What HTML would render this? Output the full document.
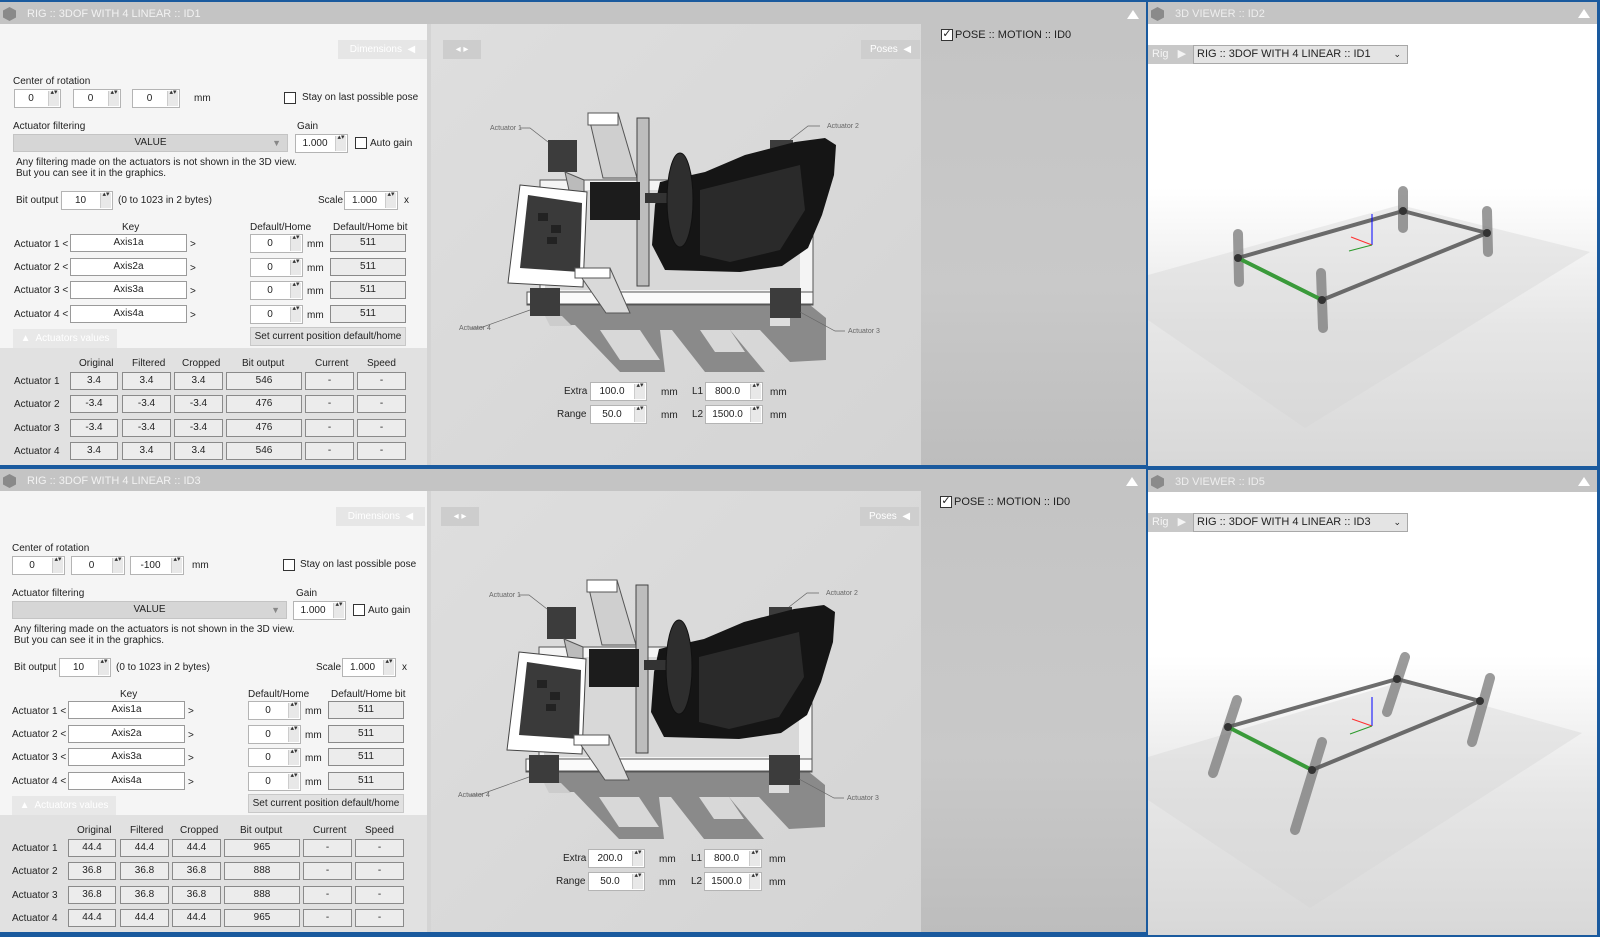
<!DOCTYPE html>
<html><head><meta charset="utf-8">
<style>
*{box-sizing:border-box;margin:0;padding:0}
body{width:1600px;height:937px;overflow:hidden;background:#1a5a9e;font-family:"Liberation Sans",Arial,sans-serif;font-size:10px;color:#222;position:relative}
.a{position:absolute}
.win{position:absolute;left:0;width:1146px;height:467px;overflow:hidden}
.tb{position:absolute;left:0;top:2px;width:1146px;height:22px;background:#c4c4c4}
.tt{position:absolute;left:27px;top:6px;color:#f2f2f2;font-size:11px}
.ico{position:absolute;left:3px;top:5px;width:13px;height:14px;background:#8a8a8a;clip-path:polygon(50% 0,100% 25%,100% 75%,50% 100%,0 75%,0 25%)}
.tri{position:absolute;width:0;height:0;border-left:6px solid transparent;border-right:6px solid transparent;border-bottom:9px solid #fff}
.form{position:absolute;left:0;top:24px;width:427px;height:324px;background:#f5f5f5}
.strip{position:absolute;left:427px;top:24px;width:4px;height:441px;background:#d4d4d4}
.vals{position:absolute;left:0;top:348px;width:427px;height:117px;background:#e1e1e1}
.img{position:absolute;left:431px;top:24px;width:490px;height:441px;background:linear-gradient(135deg,#dedede,#d4d4d4)}
.rp{position:absolute;left:921px;top:24px;width:225px;height:441px;background:linear-gradient(180deg,#c4c4c4,#c9c9c9 60%,#bdbdbd)}
.sp{position:absolute;height:19px;background:#fff;border:1px solid #b4b4b4;text-align:center;padding-right:13px;line-height:17px}
.sp:after{content:"";position:absolute;right:1px;top:1px;width:10px;height:15px;background:#e8e8e8;border-left:1px solid #ccc}
.sp:before{content:"▴▾";position:absolute;right:1px;top:-1px;width:10px;font-size:7px;line-height:8px;white-space:pre-wrap;word-break:break-all;z-index:2;color:#333}
.bx{position:absolute;height:18px;border:1px solid #8a8a8a;background:#ececec;text-align:center;line-height:16px}
.kb{position:absolute;height:18px;border:1px solid #9a9a9a;background:#fff;text-align:center;line-height:16px}
.cb{position:absolute;width:12px;height:12px;border:1px solid #333;background:#fff}
.lbl{position:absolute;white-space:nowrap}
.tab{position:absolute;background:#e6e6e6;color:#fff;text-align:center;line-height:19px;height:19px;white-space:nowrap}
.view{position:absolute;left:1148px;width:449px;height:464px;overflow:hidden;background:linear-gradient(180deg,#fff 0%,#fff 40%,#e6e6e6 70%,#d8d8d8 100%)}
.vtb{position:absolute;left:0;top:0;width:449px;height:22px;background:#c4c4c4}
.rig{position:absolute;left:0;top:43px;width:45px;height:19px;background:#c8c8c8;color:#f4f4f4;line-height:19px;padding-left:4px;font-size:11px}
.combo{position:absolute;left:45px;top:43px;width:215px;height:19px;background:#e4e4e4;border:1px solid #a8a8a8;line-height:17px;padding-left:3px;font-size:11px;white-space:nowrap}
.btn{position:absolute;height:19px;background:#e1e1e1;border:1px solid #c8c8c8;text-align:center;line-height:17px;white-space:nowrap}
</style></head><body>

<div class="win" style="top:0">
<div class="tb"><div class="ico"></div><div class="tt">RIG :: 3DOF WITH 4 LINEAR :: ID1</div><div class="tri" style="left:1127px;top:8px"></div></div>
<div class="form"></div><div class="strip"></div><div class="vals"></div>
<div class="img"></div><div class="rp"></div>
<div class="tab" style="left:338px;top:40px;width:89px">Dimensions&nbsp; ◀</div>
<div class="lbl" style="left:13px;top:76px">Center of rotation</div>
<div class="sp" style="left:14px;top:89px;width:47px">0</div>
<div class="sp" style="left:73px;top:89px;width:48px">0</div>
<div class="sp" style="left:132px;top:89px;width:48px">0</div>
<div class="lbl" style="left:194px;top:93px">mm</div>
<div class="cb" style="left:284px;top:92px"></div>
<div class="lbl" style="left:302px;top:92px">Stay on last possible pose</div>
<div class="lbl" style="left:13px;top:121px">Actuator filtering</div>
<div class="lbl" style="left:297px;top:121px">Gain</div>
<div class="a" style="left:13px;top:134px;width:275px;height:18px;background:#d6d6d6;border:1px solid #c4c4c4;text-align:center;line-height:16px">VALUE<span style="position:absolute;right:6px;color:#888;font-size:9px">▼</span></div>
<div class="sp" style="left:295px;top:134px;width:53px">1.000</div>
<div class="cb" style="left:355px;top:137px"></div>
<div class="lbl" style="left:370px;top:138px">Auto gain</div>
<div class="lbl" style="left:16px;top:157px">Any filtering made on the actuators is not shown in the 3D view.</div>
<div class="lbl" style="left:16px;top:168px">But you can see it in the graphics.</div>
<div class="lbl" style="left:16px;top:195px">Bit output</div>
<div class="sp" style="left:61px;top:191px;width:52px">10</div>
<div class="lbl" style="left:118px;top:195px">(0 to 1023 in 2 bytes)</div>
<div class="lbl" style="left:318px;top:195px">Scale</div>
<div class="sp" style="left:344px;top:191px;width:54px">1.000</div>
<div class="lbl" style="left:404px;top:195px">x</div>
<div class="lbl" style="left:122px;top:222px">Key</div>
<div class="lbl" style="left:250px;top:222px">Default/Home</div>
<div class="lbl" style="left:333px;top:222px">Default/Home bit</div>
<div class="lbl" style="left:14px;top:239px">Actuator 1 &lt;</div><div class="kb" style="left:70px;top:234px;width:117px">Axis1a</div><div class="lbl" style="left:190px;top:239px">&gt;</div><div class="sp" style="left:250px;top:234px;width:53px">0</div><div class="lbl" style="left:307px;top:239px">mm</div><div class="bx" style="left:330px;top:234px;width:76px">511</div>
<div class="lbl" style="left:14px;top:262px">Actuator 2 &lt;</div><div class="kb" style="left:70px;top:258px;width:117px">Axis2a</div><div class="lbl" style="left:190px;top:263px">&gt;</div><div class="sp" style="left:250px;top:258px;width:53px">0</div><div class="lbl" style="left:307px;top:263px">mm</div><div class="bx" style="left:330px;top:258px;width:76px">511</div>
<div class="lbl" style="left:14px;top:285px">Actuator 3 &lt;</div><div class="kb" style="left:70px;top:281px;width:117px">Axis3a</div><div class="lbl" style="left:190px;top:286px">&gt;</div><div class="sp" style="left:250px;top:281px;width:53px">0</div><div class="lbl" style="left:307px;top:286px">mm</div><div class="bx" style="left:330px;top:281px;width:76px">511</div>
<div class="lbl" style="left:14px;top:309px">Actuator 4 &lt;</div><div class="kb" style="left:70px;top:305px;width:117px">Axis4a</div><div class="lbl" style="left:190px;top:310px">&gt;</div><div class="sp" style="left:250px;top:305px;width:53px">0</div><div class="lbl" style="left:307px;top:310px">mm</div><div class="bx" style="left:330px;top:305px;width:76px">511</div>
<div class="btn" style="left:250px;top:327px;width:156px">Set current position default/home</div>
<div class="tab" style="left:13px;top:329px;width:104px;background:#e8e8e8">▲&nbsp; Actuators values</div>
<div class="lbl" style="left:79px;top:358px">Original</div><div class="lbl" style="left:132px;top:358px">Filtered</div><div class="lbl" style="left:182px;top:358px">Cropped</div><div class="lbl" style="left:242px;top:358px">Bit output</div><div class="lbl" style="left:315px;top:358px">Current</div><div class="lbl" style="left:367px;top:358px">Speed</div>
<div class="lbl" style="left:14px;top:376px">Actuator 1</div><div class="bx" style="left:70px;top:372px;width:48px">3.4</div><div class="bx" style="left:122px;top:372px;width:49px">3.4</div><div class="bx" style="left:174px;top:372px;width:49px">3.4</div><div class="bx" style="left:226px;top:372px;width:76px">546</div><div class="bx" style="left:305px;top:372px;width:49px">-</div><div class="bx" style="left:357px;top:372px;width:49px">-</div>
<div class="lbl" style="left:14px;top:399px">Actuator 2</div><div class="bx" style="left:70px;top:395px;width:48px">-3.4</div><div class="bx" style="left:122px;top:395px;width:49px">-3.4</div><div class="bx" style="left:174px;top:395px;width:49px">-3.4</div><div class="bx" style="left:226px;top:395px;width:76px">476</div><div class="bx" style="left:305px;top:395px;width:49px">-</div><div class="bx" style="left:357px;top:395px;width:49px">-</div>
<div class="lbl" style="left:14px;top:423px">Actuator 3</div><div class="bx" style="left:70px;top:419px;width:48px">-3.4</div><div class="bx" style="left:122px;top:419px;width:49px">-3.4</div><div class="bx" style="left:174px;top:419px;width:49px">-3.4</div><div class="bx" style="left:226px;top:419px;width:76px">476</div><div class="bx" style="left:305px;top:419px;width:49px">-</div><div class="bx" style="left:357px;top:419px;width:49px">-</div>
<div class="lbl" style="left:14px;top:446px">Actuator 4</div><div class="bx" style="left:70px;top:442px;width:48px">3.4</div><div class="bx" style="left:122px;top:442px;width:49px">3.4</div><div class="bx" style="left:174px;top:442px;width:49px">3.4</div><div class="bx" style="left:226px;top:442px;width:76px">546</div><div class="bx" style="left:305px;top:442px;width:49px">-</div><div class="bx" style="left:357px;top:442px;width:49px">-</div>
<div class="tab" style="left:443px;top:40px;width:38px;background:#cdcdcd">◂ ▸</div>
<div class="tab" style="left:861px;top:40px;width:59px;background:#cecece">Poses&nbsp; ◀</div>
<svg class="a" style="left:0;top:0" width="1146" height="467">
<g fill="#8a8a8a"><polygon points="548,305 810,305 826,318 826,360 790,362 760,330 730,330 765,372 705,372 672,330 660,330 665,372 620,372 575,325 560,325"/></g>
<g fill="#d8d8d8"><polygon points="600,330 640,330 660,360 620,360"/><polygon points="700,330 730,330 745,352 715,352"/></g>
<polygon points="540,180 813,180 813,305 527,305 527,292 540,292" fill="#f4f4f4" stroke="#555" stroke-width="1"/>
<rect x="545" y="190" width="255" height="100" fill="#d8d8d8"/>
<rect x="527" y="292" width="286" height="12" fill="#fafafa" stroke="#555"/>
<polygon points="548,140 577,140 577,172 548,172" fill="#3c3c3c"/><polygon points="565,172 584,180 584,195 570,195" fill="#bbb" stroke="#555"/>
<polygon points="770,140 793,140 793,170 770,170" fill="#3c3c3c"/>
<polygon points="588,113 618,113 637,178 603,178" fill="#cfcfcf" stroke="#555"/><rect x="588" y="113" width="30" height="12" fill="#fff" stroke="#555"/>
<rect x="637" y="118" width="12" height="168" fill="#bdbdbd" stroke="#444"/>
<polygon points="520,185 587,192 583,287 508,283" fill="#fff" stroke="#444"/>
<polygon points="528,195 582,203 580,272 520,268" fill="#3a3a3a"/>
<g fill="#222"><rect x="538" y="213" width="10" height="8"/><rect x="551" y="225" width="10" height="8"/><rect x="547" y="237" width="10" height="7"/></g>
<rect x="590" y="182" width="50" height="38" fill="#1c1c1c"/>
<polygon points="575,268 610,268 630,313 606,313" fill="#d9d9d9" stroke="#555"/><rect x="575" y="268" width="35" height="10" fill="#fff" stroke="#555"/>
<polygon points="530,288 560,288 560,316 530,316" fill="#3c3c3c"/><polygon points="545,316 562,316 572,326 550,326" fill="#ccc"/>
<polygon points="770,288 801,288 801,318 770,318" fill="#3c3c3c"/><rect x="770" y="318" width="20" height="8" fill="#ddd"/>
<polygon points="660,182 705,172 745,155 795,142 825,138 836,145 834,175 822,215 808,248 782,266 740,272 665,270 652,245 655,205" fill="#151515"/>
<polygon points="700,190 760,175 800,165 805,210 780,250 730,262 700,255" fill="#2a2a2a"/>
<rect x="645" y="193" width="25" height="10" fill="#333"/>
<ellipse cx="680" cy="200" rx="13" ry="47" fill="#2e2e2e" stroke="#111"/>
<g stroke="#666" stroke-width="0.7" fill="none"><polyline points="520,128 530,128 548,142"/><polyline points="820,126 808,126 790,140"/><polyline points="470,328 480,328 530,310"/><polyline points="845,331 835,331 800,312"/></g>
<g font-family="Liberation Sans,sans-serif" font-size="7" fill="#666"><text x="490" y="130">Actuator 1</text><text x="827" y="128">Actuator 2</text><text x="848" y="333">Actuator 3</text><text x="459" y="330">Actuator 4</text></g>
</svg>
<div class="lbl" style="left:564px;top:386px">Extra</div><div class="sp" style="left:590px;top:382px;width:57px">100.0</div><div class="lbl" style="left:661px;top:387px">mm</div>
<div class="lbl" style="left:692px;top:386px">L1</div><div class="sp" style="left:705px;top:382px;width:58px">800.0</div><div class="lbl" style="left:770px;top:387px">mm</div>
<div class="lbl" style="left:557px;top:409px">Range</div><div class="sp" style="left:590px;top:405px;width:57px">50.0</div><div class="lbl" style="left:661px;top:410px">mm</div>
<div class="lbl" style="left:692px;top:409px">L2</div><div class="sp" style="left:705px;top:405px;width:58px">1500.0</div><div class="lbl" style="left:770px;top:410px">mm</div>
<div class="cb" style="left:941px;top:29px;font-size:11px;line-height:9px;text-align:center;color:#222">✓</div>
<div class="lbl" style="left:955px;top:29px;color:#222;font-size:11px">POSE :: MOTION :: ID0</div>
</div>

<div class="view" style="top:2px">
<div class="vtb"><div class="ico"></div><div class="tt" style="color:#eee">3D VIEWER :: ID2</div><div class="tri" style="left:430px;top:7px"></div></div>
<div class="rig">Rig &nbsp;&nbsp;▶</div><div class="combo">RIG :: 3DOF WITH 4 LINEAR :: ID1<span style="position:absolute;right:6px;font-size:9px">⌄</span></div>
<svg class="a" style="left:-1148px;top:-2px" width="1600" height="470">
<polygon points="1148,275 1400,205 1590,252 1305,428 1148,320" fill="#d4d4d4" opacity="0.4"/>
<g stroke="#7a7a7a" stroke-width="10" stroke-linecap="round" opacity="0.75"><line x1="1238" y1="234" x2="1239" y2="282"/><line x1="1321" y1="273" x2="1323" y2="328"/><line x1="1487" y1="211" x2="1488" y2="252"/><line x1="1403" y1="191" x2="1403" y2="228"/></g>
<g stroke="#555" stroke-width="4" opacity="0.85"><line x1="1238" y1="258" x2="1403" y2="211"/><line x1="1403" y1="211" x2="1487" y2="233"/><line x1="1487" y1="233" x2="1322" y2="300"/></g>
<line x1="1238" y1="258" x2="1322" y2="300" stroke="#3a9a3a" stroke-width="4"/>
<g fill="#333"><circle cx="1238" cy="258" r="4"/><circle cx="1322" cy="300" r="4"/><circle cx="1487" cy="233" r="4"/><circle cx="1403" cy="211" r="4"/></g>
<line x1="1372" y1="245" x2="1372" y2="214" stroke="#0000ff"/><line x1="1372" y1="245" x2="1351" y2="237" stroke="#ff3030"/><line x1="1372" y1="245" x2="1349" y2="251" stroke="#2a9a2a"/>
</svg>
</div>

<div class="win" style="top:467px">
<div class="tb"><div class="ico"></div><div class="tt">RIG :: 3DOF WITH 4 LINEAR :: ID3</div><div class="tri" style="left:1126px;top:8px"></div></div>
<div class="form"></div><div class="strip"></div><div class="vals"></div>
<div class="img"></div><div class="rp"></div>
<div class="tab" style="left:336px;top:40px;width:89px">Dimensions&nbsp; ◀</div>
<div class="lbl" style="left:12px;top:76px">Center of rotation</div>
<div class="sp" style="left:12px;top:89px;width:53px">0</div>
<div class="sp" style="left:71px;top:89px;width:54px">0</div>
<div class="sp" style="left:130px;top:89px;width:54px">-100</div>
<div class="lbl" style="left:192px;top:93px">mm</div>
<div class="cb" style="left:283px;top:92px"></div>
<div class="lbl" style="left:300px;top:92px">Stay on last possible pose</div>
<div class="lbl" style="left:12px;top:121px">Actuator filtering</div>
<div class="lbl" style="left:296px;top:121px">Gain</div>
<div class="a" style="left:12px;top:134px;width:275px;height:18px;background:#d6d6d6;border:1px solid #c4c4c4;text-align:center;line-height:16px">VALUE<span style="position:absolute;right:6px;color:#888;font-size:9px">▼</span></div>
<div class="sp" style="left:293px;top:134px;width:53px">1.000</div>
<div class="cb" style="left:353px;top:137px"></div>
<div class="lbl" style="left:368px;top:138px">Auto gain</div>
<div class="lbl" style="left:14px;top:157px">Any filtering made on the actuators is not shown in the 3D view.</div>
<div class="lbl" style="left:14px;top:168px">But you can see it in the graphics.</div>
<div class="lbl" style="left:14px;top:195px">Bit output</div>
<div class="sp" style="left:59px;top:191px;width:52px">10</div>
<div class="lbl" style="left:116px;top:195px">(0 to 1023 in 2 bytes)</div>
<div class="lbl" style="left:316px;top:195px">Scale</div>
<div class="sp" style="left:342px;top:191px;width:54px">1.000</div>
<div class="lbl" style="left:402px;top:195px">x</div>
<div class="lbl" style="left:120px;top:222px">Key</div>
<div class="lbl" style="left:248px;top:222px">Default/Home</div>
<div class="lbl" style="left:331px;top:222px">Default/Home bit</div>
<div class="lbl" style="left:12px;top:239px">Actuator 1 &lt;</div><div class="kb" style="left:68px;top:234px;width:117px">Axis1a</div><div class="lbl" style="left:188px;top:239px">&gt;</div><div class="sp" style="left:248px;top:234px;width:53px">0</div><div class="lbl" style="left:305px;top:239px">mm</div><div class="bx" style="left:328px;top:234px;width:76px">511</div>
<div class="lbl" style="left:12px;top:262px">Actuator 2 &lt;</div><div class="kb" style="left:68px;top:258px;width:117px">Axis2a</div><div class="lbl" style="left:188px;top:263px">&gt;</div><div class="sp" style="left:248px;top:258px;width:53px">0</div><div class="lbl" style="left:305px;top:263px">mm</div><div class="bx" style="left:328px;top:258px;width:76px">511</div>
<div class="lbl" style="left:12px;top:285px">Actuator 3 &lt;</div><div class="kb" style="left:68px;top:281px;width:117px">Axis3a</div><div class="lbl" style="left:188px;top:286px">&gt;</div><div class="sp" style="left:248px;top:281px;width:53px">0</div><div class="lbl" style="left:305px;top:286px">mm</div><div class="bx" style="left:328px;top:281px;width:76px">511</div>
<div class="lbl" style="left:12px;top:309px">Actuator 4 &lt;</div><div class="kb" style="left:68px;top:305px;width:117px">Axis4a</div><div class="lbl" style="left:188px;top:310px">&gt;</div><div class="sp" style="left:248px;top:305px;width:53px">0</div><div class="lbl" style="left:305px;top:310px">mm</div><div class="bx" style="left:328px;top:305px;width:76px">511</div>
<div class="btn" style="left:248px;top:327px;width:156px">Set current position default/home</div>
<div class="tab" style="left:12px;top:329px;width:104px;background:#e8e8e8">▲&nbsp; Actuators values</div>
<div class="lbl" style="left:77px;top:358px">Original</div><div class="lbl" style="left:130px;top:358px">Filtered</div><div class="lbl" style="left:180px;top:358px">Cropped</div><div class="lbl" style="left:240px;top:358px">Bit output</div><div class="lbl" style="left:313px;top:358px">Current</div><div class="lbl" style="left:365px;top:358px">Speed</div>
<div class="lbl" style="left:12px;top:376px">Actuator 1</div><div class="bx" style="left:68px;top:372px;width:48px">44.4</div><div class="bx" style="left:120px;top:372px;width:49px">44.4</div><div class="bx" style="left:172px;top:372px;width:49px">44.4</div><div class="bx" style="left:224px;top:372px;width:76px">965</div><div class="bx" style="left:303px;top:372px;width:49px">-</div><div class="bx" style="left:355px;top:372px;width:49px">-</div>
<div class="lbl" style="left:12px;top:399px">Actuator 2</div><div class="bx" style="left:68px;top:395px;width:48px">36.8</div><div class="bx" style="left:120px;top:395px;width:49px">36.8</div><div class="bx" style="left:172px;top:395px;width:49px">36.8</div><div class="bx" style="left:224px;top:395px;width:76px">888</div><div class="bx" style="left:303px;top:395px;width:49px">-</div><div class="bx" style="left:355px;top:395px;width:49px">-</div>
<div class="lbl" style="left:12px;top:423px">Actuator 3</div><div class="bx" style="left:68px;top:419px;width:48px">36.8</div><div class="bx" style="left:120px;top:419px;width:49px">36.8</div><div class="bx" style="left:172px;top:419px;width:49px">36.8</div><div class="bx" style="left:224px;top:419px;width:76px">888</div><div class="bx" style="left:303px;top:419px;width:49px">-</div><div class="bx" style="left:355px;top:419px;width:49px">-</div>
<div class="lbl" style="left:12px;top:446px">Actuator 4</div><div class="bx" style="left:68px;top:442px;width:48px">44.4</div><div class="bx" style="left:120px;top:442px;width:49px">44.4</div><div class="bx" style="left:172px;top:442px;width:49px">44.4</div><div class="bx" style="left:224px;top:442px;width:76px">965</div><div class="bx" style="left:303px;top:442px;width:49px">-</div><div class="bx" style="left:355px;top:442px;width:49px">-</div>
<div class="tab" style="left:441px;top:40px;width:38px;background:#cdcdcd">◂ ▸</div>
<div class="tab" style="left:860px;top:40px;width:59px;background:#cecece">Poses&nbsp; ◀</div>
<svg class="a" style="left:-1px;top:0" width="1146" height="467">
<g fill="#8a8a8a"><polygon points="548,305 810,305 826,318 826,360 790,362 760,330 730,330 765,372 705,372 672,330 660,330 665,372 620,372 575,325 560,325"/></g>
<g fill="#d8d8d8"><polygon points="600,330 640,330 660,360 620,360"/><polygon points="700,330 730,330 745,352 715,352"/></g>
<polygon points="540,180 813,180 813,305 527,305 527,292 540,292" fill="#f4f4f4" stroke="#555" stroke-width="1"/>
<rect x="545" y="190" width="255" height="100" fill="#d8d8d8"/>
<rect x="527" y="292" width="286" height="12" fill="#fafafa" stroke="#555"/>
<polygon points="548,140 577,140 577,172 548,172" fill="#3c3c3c"/><polygon points="565,172 584,180 584,195 570,195" fill="#bbb" stroke="#555"/>
<polygon points="770,140 793,140 793,170 770,170" fill="#3c3c3c"/>
<polygon points="588,113 618,113 637,178 603,178" fill="#cfcfcf" stroke="#555"/><rect x="588" y="113" width="30" height="12" fill="#fff" stroke="#555"/>
<rect x="637" y="118" width="12" height="168" fill="#bdbdbd" stroke="#444"/>
<polygon points="520,185 587,192 583,287 508,283" fill="#fff" stroke="#444"/>
<polygon points="528,195 582,203 580,272 520,268" fill="#3a3a3a"/>
<g fill="#222"><rect x="538" y="213" width="10" height="8"/><rect x="551" y="225" width="10" height="8"/><rect x="547" y="237" width="10" height="7"/></g>
<rect x="590" y="182" width="50" height="38" fill="#1c1c1c"/>
<polygon points="575,268 610,268 630,313 606,313" fill="#d9d9d9" stroke="#555"/><rect x="575" y="268" width="35" height="10" fill="#fff" stroke="#555"/>
<polygon points="530,288 560,288 560,316 530,316" fill="#3c3c3c"/><polygon points="545,316 562,316 572,326 550,326" fill="#ccc"/>
<polygon points="770,288 801,288 801,318 770,318" fill="#3c3c3c"/><rect x="770" y="318" width="20" height="8" fill="#ddd"/>
<polygon points="660,182 705,172 745,155 795,142 825,138 836,145 834,175 822,215 808,248 782,266 740,272 665,270 652,245 655,205" fill="#151515"/>
<polygon points="700,190 760,175 800,165 805,210 780,250 730,262 700,255" fill="#2a2a2a"/>
<rect x="645" y="193" width="25" height="10" fill="#333"/>
<ellipse cx="680" cy="200" rx="13" ry="47" fill="#2e2e2e" stroke="#111"/>
<g stroke="#666" stroke-width="0.7" fill="none"><polyline points="520,128 530,128 548,142"/><polyline points="820,126 808,126 790,140"/><polyline points="470,328 480,328 530,310"/><polyline points="845,331 835,331 800,312"/></g>
<g font-family="Liberation Sans,sans-serif" font-size="7" fill="#666"><text x="490" y="130">Actuator 1</text><text x="827" y="128">Actuator 2</text><text x="848" y="333">Actuator 3</text><text x="459" y="330">Actuator 4</text></g>
</svg>
<div class="lbl" style="left:563px;top:386px">Extra</div><div class="sp" style="left:588px;top:382px;width:57px">200.0</div><div class="lbl" style="left:659px;top:387px">mm</div>
<div class="lbl" style="left:691px;top:386px">L1</div><div class="sp" style="left:704px;top:382px;width:58px">800.0</div><div class="lbl" style="left:769px;top:387px">mm</div>
<div class="lbl" style="left:556px;top:409px">Range</div><div class="sp" style="left:588px;top:405px;width:57px">50.0</div><div class="lbl" style="left:659px;top:410px">mm</div>
<div class="lbl" style="left:691px;top:409px">L2</div><div class="sp" style="left:704px;top:405px;width:58px">1500.0</div><div class="lbl" style="left:769px;top:410px">mm</div>
<div class="cb" style="left:940px;top:29px;font-size:11px;line-height:9px;text-align:center;color:#222">✓</div>
<div class="lbl" style="left:954px;top:29px;color:#222;font-size:11px">POSE :: MOTION :: ID0</div>
</div>

<div class="view" style="top:470px;height:465px">
<div class="vtb"><div class="ico"></div><div class="tt" style="color:#eee">3D VIEWER :: ID5</div><div class="tri" style="left:430px;top:7px"></div></div>
<div class="rig">Rig &nbsp;&nbsp;▶</div><div class="combo">RIG :: 3DOF WITH 4 LINEAR :: ID3<span style="position:absolute;right:6px;font-size:9px">⌄</span></div>
<svg class="a" style="left:-1148px;top:-470px" width="1600" height="937">
<polygon points="1148,757 1400,682 1582,733 1310,908 1148,800" fill="#d4d4d4" opacity="0.4"/>
<g stroke="#7a7a7a" stroke-width="10" stroke-linecap="round" opacity="0.75"><line x1="1237" y1="700" x2="1213" y2="773"/><line x1="1322" y1="742" x2="1295" y2="830"/><line x1="1490" y1="678" x2="1472" y2="742"/><line x1="1405" y1="657" x2="1387" y2="712"/></g>
<g stroke="#555" stroke-width="4" opacity="0.85"><line x1="1228" y1="727" x2="1397" y2="679"/><line x1="1397" y1="679" x2="1480" y2="701"/><line x1="1480" y1="701" x2="1312" y2="770"/></g>
<line x1="1228" y1="727" x2="1312" y2="770" stroke="#3a9a3a" stroke-width="4"/>
<g fill="#333"><circle cx="1228" cy="727" r="4"/><circle cx="1312" cy="770" r="4"/><circle cx="1480" cy="701" r="4"/><circle cx="1397" cy="679" r="4"/></g>
<line x1="1372" y1="726" x2="1372" y2="697" stroke="#0000ff"/><line x1="1372" y1="726" x2="1352" y2="719" stroke="#ff3030"/><line x1="1372" y1="726" x2="1350" y2="734" stroke="#2a9a2a"/>
</svg>
</div>
</body></html>
